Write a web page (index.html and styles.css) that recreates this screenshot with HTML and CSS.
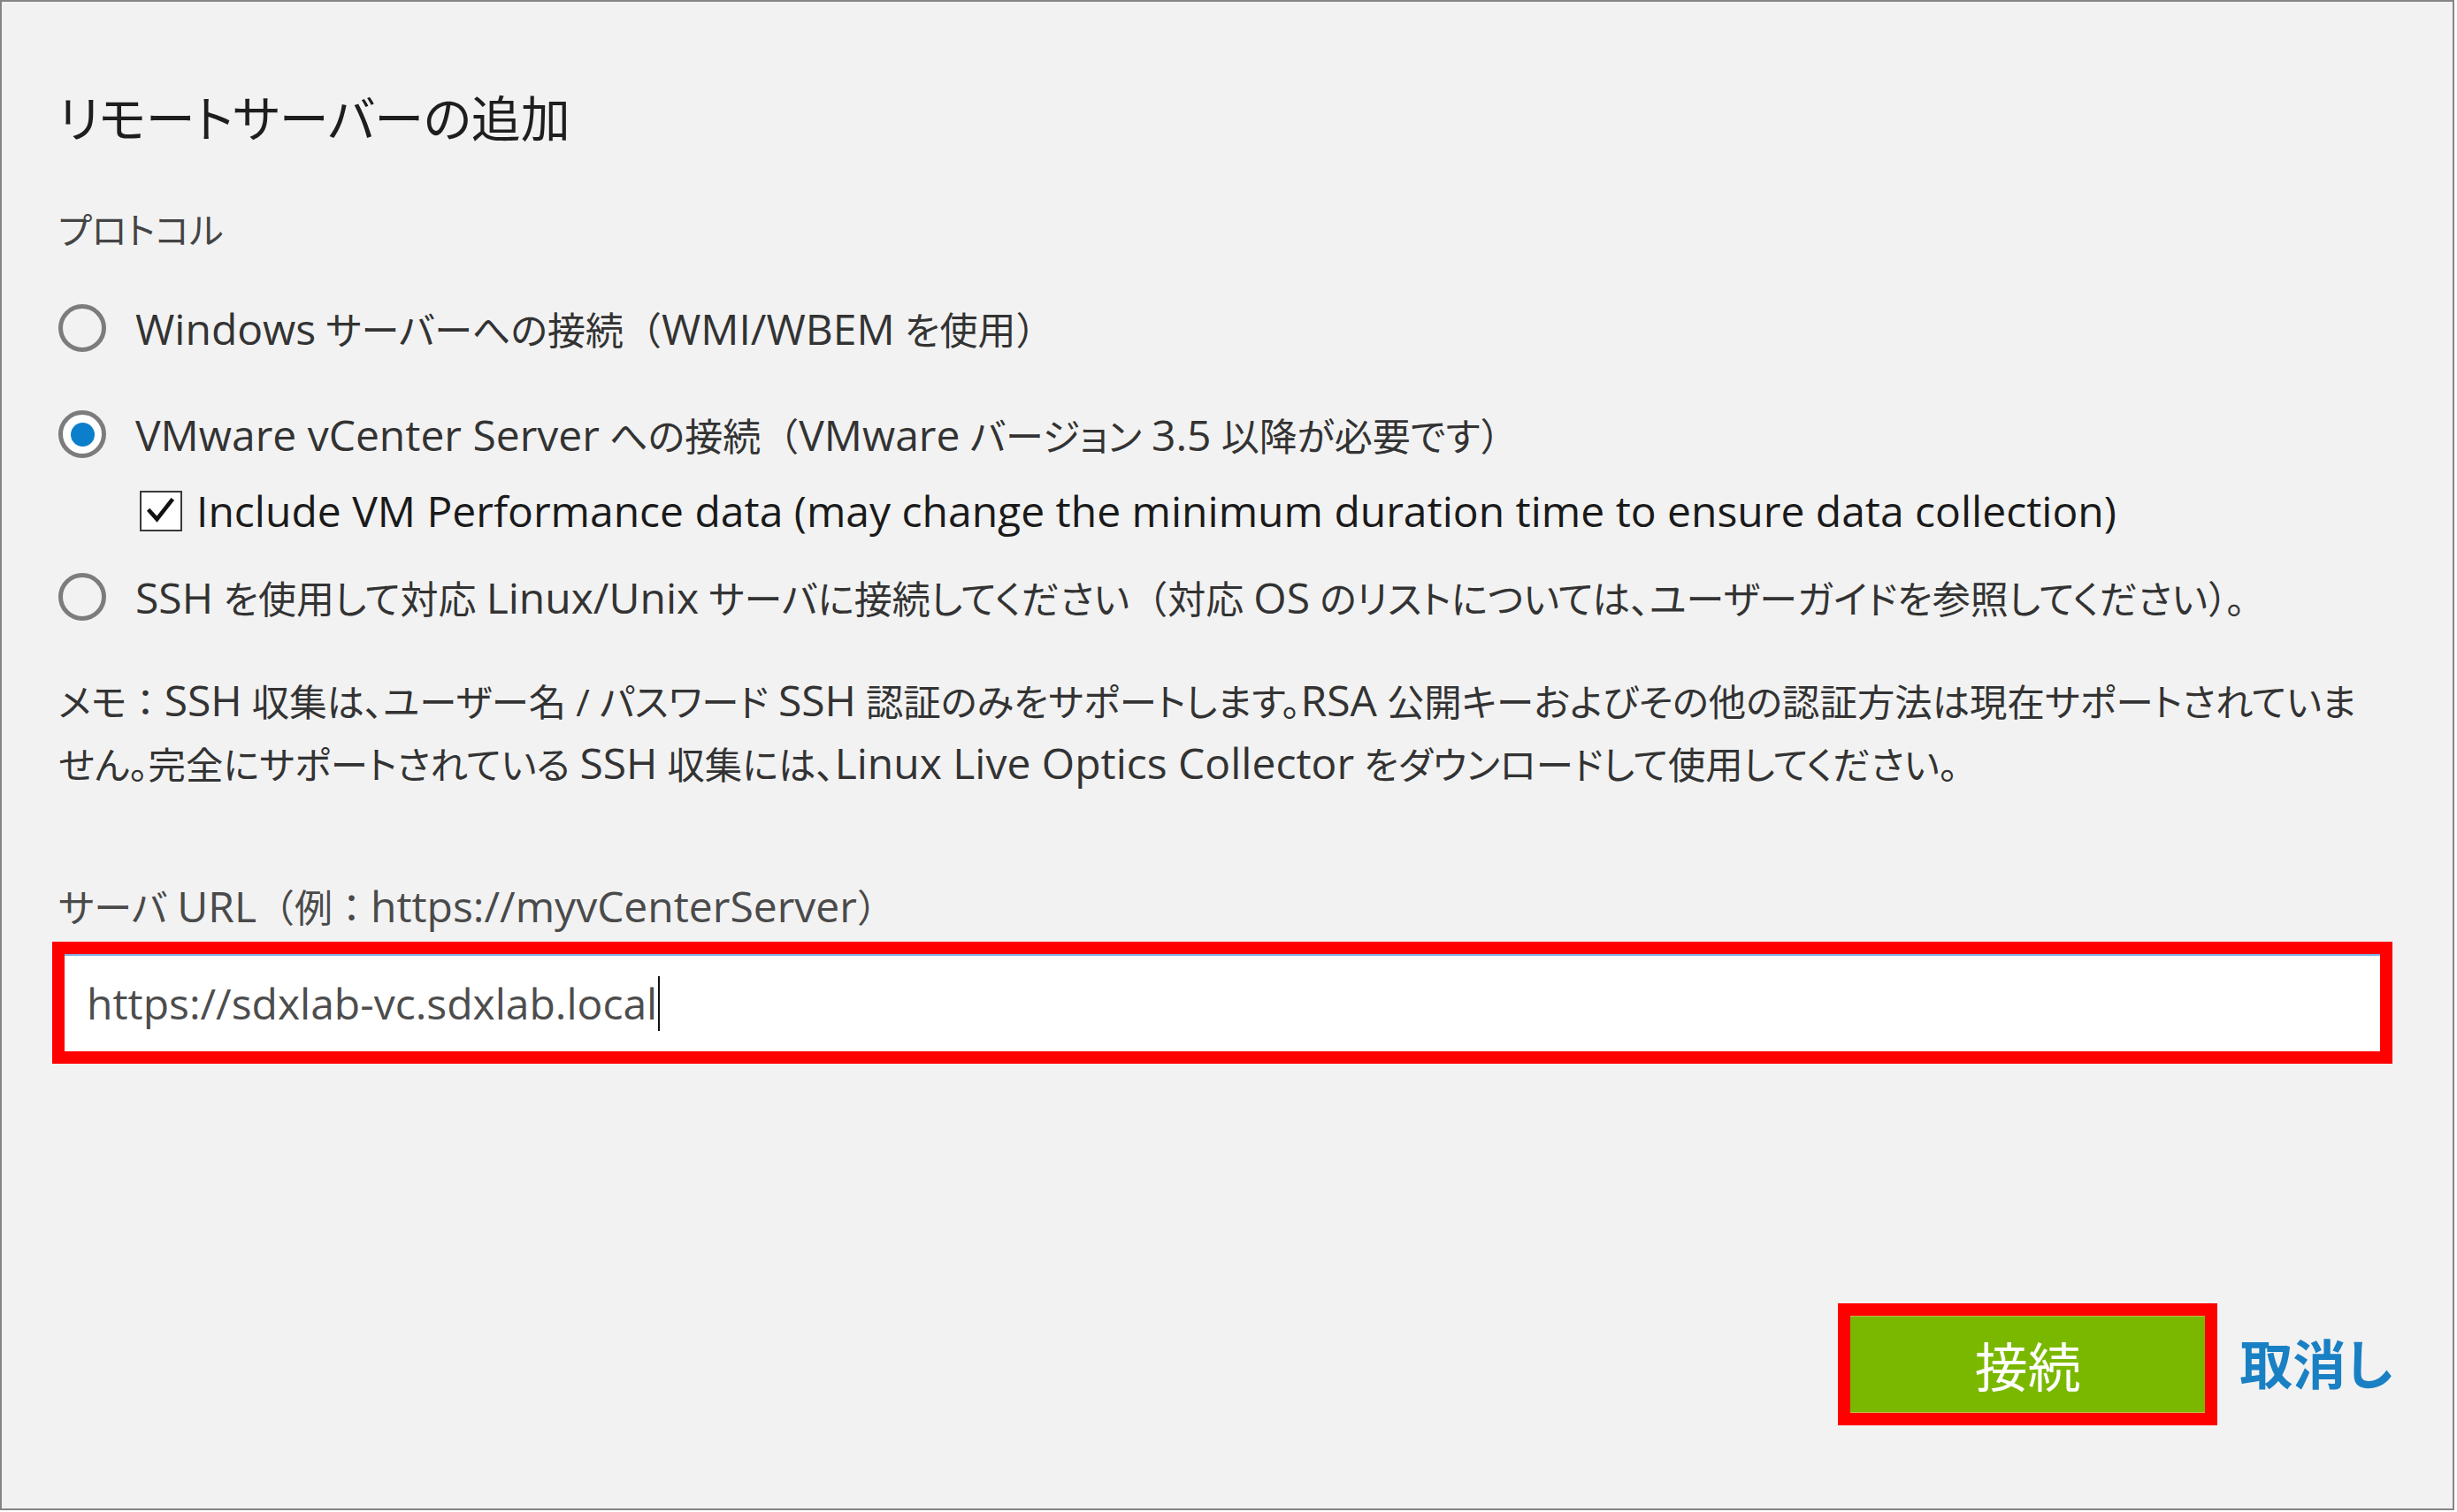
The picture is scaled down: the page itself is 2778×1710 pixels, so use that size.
FILE: index.html
```html
<!DOCTYPE html>
<html lang="ja">
<head>
<meta charset="utf-8">
<title>リモートサーバーの追加</title>
<link rel="stylesheet" href="styles.css">
</head>
<body>
<div class="dialog">
  <h1 class="title">リモートサーバーの追加</h1>
  <div class="section-label">プロトコル</div>
  <div class="options">
    <label class="radio-row row-win"><span class="radio"></span><span class="opt-text"><span class="en">Windows</span> サーバーへの接続<span class="fw">（</span><span class="en">WMI/WBEM</span> を使用<span class="fw">）</span></span></label>
    <label class="radio-row row-vm"><span class="radio checked"><span class="dot"></span></span><span class="opt-text"><span class="en">VMware vCenter Server</span> への接続<span class="fw">（</span><span class="en">VMware</span> バージョン <span class="en">3.5</span> 以降が必要です<span class="fw">）</span></span></label>
    <label class="check-row"><span class="checkbox"><svg viewBox="0 0 46 46" width="42" height="42"><path d="M9 23 L18 33 L36 10" fill="none" stroke="#111" stroke-width="5" stroke-linecap="square" stroke-linejoin="miter"/></svg></span><span class="opt-text en">Include VM Performance data (may change the minimum duration time to ensure data collection)</span></label>
    <label class="radio-row row-ssh"><span class="radio"></span><span class="opt-text"><span class="en">SSH</span> を使用して対応 <span class="en">Linux/Unix</span> サーバに接続してください<span class="fw">（</span>対応 <span class="en">OS</span> のリストについては、ユーザーガイドを参照してください<span class="fw">）。</span></span></label>
  </div>
  <p class="memo">メモ<span class="fw">：</span><span class="en">SSH</span> 収集は、ユーザー名 / パスワード <span class="en">SSH</span> 認証のみをサポートします。<span class="en">RSA</span> 公開キーおよびその他の認証方法は現在サポートされていま<br>せん。完全にサポートされている <span class="en">SSH</span> 収集には、<span class="en">Linux Live Optics Collector</span> をダウンロードして使用してください。</p>
  <div class="field-label">サーバ <span class="en">URL</span><span class="fw">（</span>例<span class="fw">：</span><span class="en">https://myvCenterServer</span><span class="fw">）</span></div>
  <div class="highlight input-hl">
    <div class="input en">https://sdxlab-vc.sdxlab.local<span class="caret"></span></div>
  </div>
  <div class="actions">
    <div class="highlight btn-hl"><button class="btn-connect">接続</button></div>
    <a class="cancel">取消し</a>
  </div>
</div>
</body>
</html>
```

FILE: styles.css
```css
html, body {
  margin: 0;
  padding: 0;
  background: #ffffff;
}

body {
  font-family: "Open Sans", "Noto Sans CJK JP", sans-serif;
  font-feature-settings: "palt";
  color: #333333;
}

.en {
  font-size: 48px;
  line-height: 1;
}

.fw {
  font-feature-settings: normal;
}

.dialog {
  box-sizing: border-box;
  width: 2775px;
  height: 1708px;
  border: 2px solid #858585;
  background: #f2f2f2;
  padding: 0 68px 0 64px;
  display: flex;
  flex-direction: column;
}

.title {
  margin: 91px 0 0 0;
  font-size: 56px;
  line-height: 80px;
  font-weight: 400;
  color: #1e1e1e;
  white-space: nowrap;
}

.section-label {
  margin-top: 57px;
  font-size: 41px;
  line-height: 60px;
  color: #444444;
}

.options {
  display: flex;
  flex-direction: column;
}

.radio-row, .check-row {
  display: flex;
  align-items: center;
  height: 60px;
  font-size: 43px;
  white-space: nowrap;
}

.row-win { margin-top: 51px; }
.row-vm { margin-top: 60px; }
.check-row { margin-top: 27px; padding-left: 92px; color: #1a1a1a; }
.row-ssh { margin-top: 37px; }

.radio {
  box-sizing: border-box;
  width: 54px;
  height: 54px;
  border-radius: 50%;
  border: 5px solid #7c7c7c;
  margin-right: 33px;
  display: flex;
  align-items: center;
  justify-content: center;
  flex: none;
}

.radio.checked {
  background: #ffffff;
}

.radio .dot {
  width: 27px;
  height: 27px;
  border-radius: 50%;
  background: #0c7fcc;
}

.checkbox {
  box-sizing: border-box;
  width: 48px;
  height: 46px;
  border: 2px solid #3a3a3a;
  background: #ffffff;
  margin-right: 16px;
  display: flex;
  align-items: center;
  justify-content: center;
  flex: none;
}

.memo {
  margin: 53px 0 0 0;
  font-size: 42.4px;
  line-height: 71px;
  color: #333333;
  white-space: nowrap;
}

.field-label {
  margin-top: 97px;
  font-size: 43px;
  line-height: 60px;
  color: #4a4a4a;
  white-space: nowrap;
}

.highlight {
  box-sizing: border-box;
  border: 14px solid #ff0000;
}

.input-hl {
  margin: 8px 0 0 -7px;
  height: 138px;
}

.input {
  box-sizing: border-box;
  height: 110px;
  background: #ffffff;
  border-top: 2px solid #7fb2e5;
  padding-left: 25px;
  display: flex;
  align-items: center;
  color: #4d4d4d;
  white-space: nowrap;
}

.caret {
  display: inline-block;
  width: 2px;
  height: 62px;
  background: #111111;
  margin-left: 1px;
}

.actions {
  margin-top: 271px;
  display: flex;
  justify-content: flex-end;
  align-items: center;
}

.btn-hl {
  width: 429px;
  height: 138px;
}

.btn-connect {
  display: block;
  width: 100%;
  height: 100%;
  border: none;
  border-top: 1px solid #c9b24a;
  border-bottom: 1px solid #c9b24a;
  background: #7ab800;
  color: #ffffff;
  font-family: "Open Sans", "Noto Sans CJK JP", sans-serif;
  font-size: 60px;
  font-weight: 400;
  padding: 0;
}

.cancel {
  margin-left: 25px;
  font-size: 60px;
  font-weight: 700;
  color: #1a80c4;
  line-height: 80px;
}
```
